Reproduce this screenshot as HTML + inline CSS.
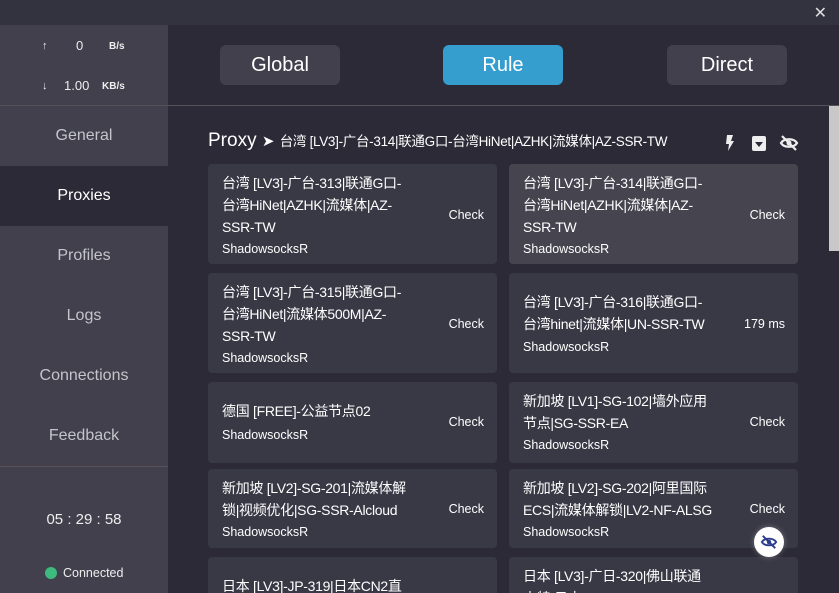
<!DOCTYPE html>
<html><head><meta charset="utf-8"><style>
*{margin:0;padding:0;box-sizing:border-box}
html,body{width:839px;height:593px;overflow:hidden}
body{background:#2b2a36;font-family:"Liberation Sans","Noto Sans CJK SC",sans-serif;color:#fff;position:relative}
.top{position:absolute;left:0;top:0;width:839px;height:25px;background:#33323f}
.side{position:absolute;left:0;top:25px;width:168px;height:568px;background:#41404c}
.nav{position:absolute;left:0;width:168px;text-align:center;font-size:16px;color:#c4c4cc}
.btn{position:absolute;top:45px;width:120px;height:40px;border-radius:6px;background:#41404c;font-size:20px;text-align:center;line-height:40px;color:#fff}
.card{position:absolute;width:289px;background:#393845;border-radius:4px;overflow:hidden}
.card .t{position:absolute;left:14px;font-size:14px;line-height:22px;white-space:nowrap;letter-spacing:-0.3px}
.card .s{position:absolute;left:14px;font-size:12.5px}
.card .c{position:absolute;right:13px;font-size:12.5px}
</style></head><body>
<div class="top"></div>
<div style="position:absolute;right:12px;top:3px;font-size:16px;color:#ddd">✕</div>
<div class="side"></div>
<div style="position:absolute;left:0;top:105px;width:839px;height:1px;background:#55535a"></div>
<div style="position:absolute;left:0;top:166px;width:168px;height:60px;background:#2b2a36"></div>
<div style="position:absolute;left:0;top:154px;width:168px;height:12px;background:#41404c;border-bottom-right-radius:10px"></div>
<div style="position:absolute;left:0;top:226px;width:168px;height:12px;background:#41404c;border-top-right-radius:10px"></div>
<div style="position:absolute;left:42px;top:40px;font-size:11px;font-weight:bold;color:#eee">↑</div>
<div style="position:absolute;left:76px;top:38px;font-size:13px;color:#eee">0</div>
<div style="position:absolute;left:109px;top:41px;font-size:10px;font-weight:bold;color:#eee">B/s</div>
<div style="position:absolute;left:42px;top:80px;font-size:11px;font-weight:bold;color:#eee">↓</div>
<div style="position:absolute;left:64px;top:78px;font-size:13px;color:#eee">1.00</div>
<div style="position:absolute;left:102px;top:81px;font-size:10px;font-weight:bold;color:#eee">KB/s</div>
<div class="nav" style="top:127px">General</div>
<div class="nav" style="top:187px;color:#fff">Proxies</div>
<div class="nav" style="top:247px">Profiles</div>
<div class="nav" style="top:307px">Logs</div>
<div class="nav" style="top:367px">Connections</div>
<div class="nav" style="top:427px">Feedback</div>
<div style="position:absolute;left:0;top:466px;width:168px;height:1px;background:#5a5256"></div>
<div style="position:absolute;left:0;top:511px;width:168px;text-align:center;font-size:15px;color:#eee">05 : 29 : 58</div>
<div style="position:absolute;left:45px;top:567px;width:12px;height:12px;border-radius:50%;background:#3dba7e"></div>
<div style="position:absolute;left:63px;top:566px;font-size:12.5px;color:#eee">Connected</div>

<div class="btn" style="left:220px">Global</div>
<div class="btn" style="left:443px;background:#359ecf">Rule</div>
<div class="btn" style="left:667px">Direct</div>

<div style="position:absolute;left:208px;top:130px;font-size:19px;white-space:nowrap">Proxy <span style="font-size:15px">➤</span> <span style="font-size:13.5px;letter-spacing:-0.3px">台湾 [LV3]-广台-314|联通G口-台湾HiNet|AZHK|流媒体|AZ-SSR-TW</span></div>
<svg style="position:absolute;left:724px;top:134px" width="12" height="18" viewBox="0 0 12 18"><path d="M3 1H9L7 7H10L4 17L5 10H2Z" fill="#eee"/></svg>
<div style="position:absolute;left:752px;top:136px;width:14px;height:15px;background:#eee;border-radius:2px"><div style="position:absolute;left:3px;top:6px;width:0;height:0;border-left:4px solid transparent;border-right:4px solid transparent;border-top:5px solid #2b2a36"></div></div>
<svg style="position:absolute;left:779px;top:134px" width="20" height="18" viewBox="0 0 20 18"><path d="M2 9C5 4 15 4 18 9C15 14 5 14 2 9Z" fill="none" stroke="#eee" stroke-width="2.2"/><circle cx="10" cy="9" r="2.5" fill="#eee"/><path d="M3 2L17 16" stroke="#eee" stroke-width="2.2"/></svg>
<div style="position:absolute;left:829px;top:106px;width:10px;height:145px;background:#c8c8c8"></div>

<div class="card" style="left:208px;top:164px;height:100px"><div class="t" style="top:8px">台湾 [LV3]-广台-313|联通G口-<br>台湾HiNet|AZHK|流媒体|AZ-<br>SSR-TW</div><div class="s" style="top:78px">ShadowsocksR</div><div class="c" style="top:44px">Check</div></div>
<div class="card" style="left:509px;top:164px;height:100px;background:#45444f"><div class="t" style="top:8px">台湾 [LV3]-广台-314|联通G口-<br>台湾HiNet|AZHK|流媒体|AZ-<br>SSR-TW</div><div class="s" style="top:78px">ShadowsocksR</div><div class="c" style="top:44px">Check</div></div>
<div class="card" style="left:208px;top:273px;height:100px"><div class="t" style="top:8px">台湾 [LV3]-广台-315|联通G口-<br>台湾HiNet|流媒体500M|AZ-<br>SSR-TW</div><div class="s" style="top:78px">ShadowsocksR</div><div class="c" style="top:44px">Check</div></div>
<div class="card" style="left:509px;top:273px;height:100px"><div class="t" style="top:18px">台湾 [LV3]-广台-316|联通G口-<br>台湾hinet|流媒体|UN-SSR-TW</div><div class="s" style="top:67px">ShadowsocksR</div><div class="c" style="top:44px">179 ms</div></div>
<div class="card" style="left:208px;top:382px;height:81px"><div class="t" style="top:18px">德国 [FREE]-公益节点02</div><div class="s" style="top:46px">ShadowsocksR</div><div class="c" style="top:33px">Check</div></div>
<div class="card" style="left:509px;top:382px;height:81px"><div class="t" style="top:8px">新加坡 [LV1]-SG-102|墙外应用<br>节点|SG-SSR-EA</div><div class="s" style="top:56px">ShadowsocksR</div><div class="c" style="top:33px">Check</div></div>
<div class="card" style="left:208px;top:469px;height:79px"><div class="t" style="top:8px">新加坡 [LV2]-SG-201|流媒体解<br>锁|视频优化|SG-SSR-Alcloud</div><div class="s" style="top:56px">ShadowsocksR</div><div class="c" style="top:33px">Check</div></div>
<div class="card" style="left:509px;top:469px;height:79px"><div class="t" style="top:8px">新加坡 [LV2]-SG-202|阿里国际<br>ECS|流媒体解锁|LV2-NF-ALSG</div><div class="s" style="top:56px">ShadowsocksR</div><div class="c" style="top:33px">Check</div></div>
<div class="card" style="left:208px;top:557px;height:60px"><div class="t" style="top:18px">日本 [LV3]-JP-319|日本CN2直</div></div>
<div class="card" style="left:509px;top:557px;height:60px"><div class="t" style="top:8px">日本 [LV3]-广日-320|佛山联通<br>山特 日本NTT|500M|UN-SSR</div></div>
<div style="position:absolute;left:754px;top:527px;width:30px;height:30px;border-radius:50%;background:#fff;box-shadow:0 0 6px rgba(255,255,255,.3)"></div>
<svg style="position:absolute;left:759px;top:534px" width="20" height="16" viewBox="0 0 20 18"><path d="M2 9C5 4 15 4 18 9C15 14 5 14 2 9Z" fill="none" stroke="#2c3e8c" stroke-width="2.2"/><circle cx="10" cy="9" r="2.5" fill="#2c3e8c"/><path d="M3 2L17 16" stroke="#2c3e8c" stroke-width="2.2"/></svg>
</body></html>
